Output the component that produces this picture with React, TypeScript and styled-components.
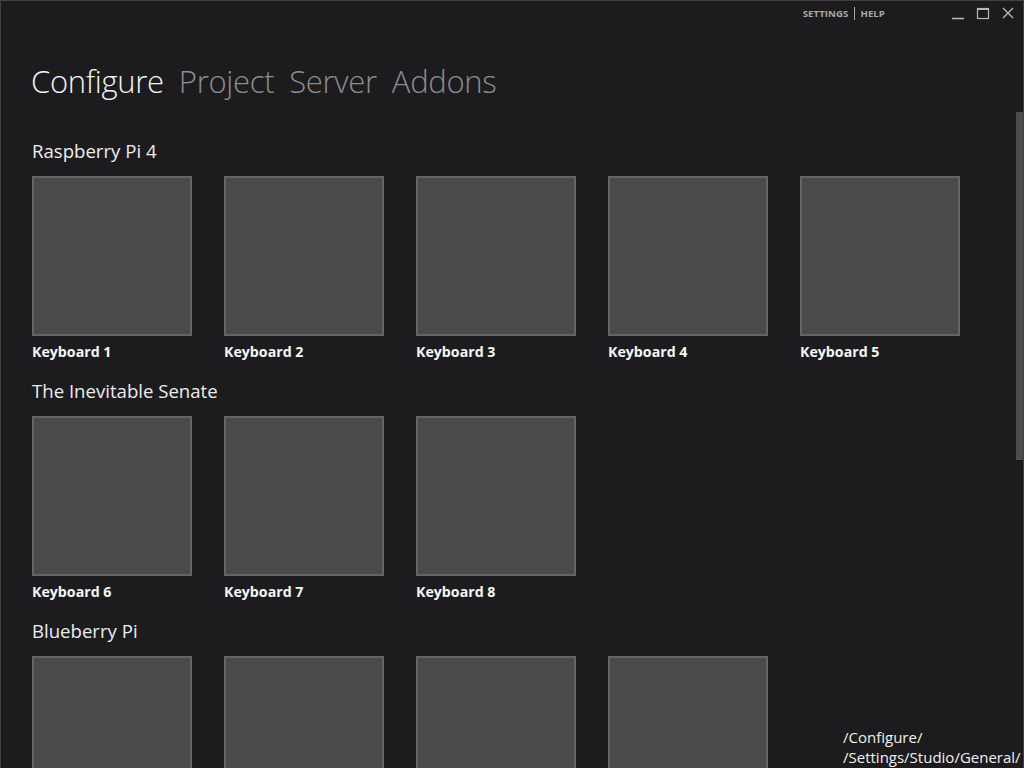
import React from "react";
import styled, { createGlobalStyle } from "styled-components";

const GlobalStyle = createGlobalStyle`
  html, body {
    margin: 0;
    padding: 0;
    background: #1c1c1e;
    overflow: hidden;
  }
  * { box-sizing: border-box; }
`;

interface Group {
  title: string;
  items: string[];
}

// the last group runs past the bottom edge, its labels are never in view
const groups: Group[] = [
  { title: "Raspberry Pi 4", items: ["Keyboard 1", "Keyboard 2", "Keyboard 3", "Keyboard 4", "Keyboard 5"] },
  { title: "The Inevitable Senate", items: ["Keyboard 6", "Keyboard 7", "Keyboard 8"] },
  { title: "Blueberry Pi", items: ["", "", "", ""] },
];

const tabs = ["Configure", "Project", "Server", "Addons"];

const Window = styled.div`
  position: relative;
  width: 1024px;
  height: 768px;
  border: 1px solid #404043;
  border-bottom: none;
  background: #1c1c1e;
  display: flex;
  flex-direction: column;
  overflow: hidden;
  font-family: "Open Sans", "Noto Sans", sans-serif;
`;

const TitleBar = styled.div`
  height: 24px;
  display: flex;
  align-items: center;
  justify-content: flex-end;
  padding-right: 3px;
`;

const TopLinks = styled.div`
  display: flex;
  align-items: center;
  margin-right: 60px;
  font-size: 9.6px;
  font-weight: 700;
  color: #a8a8a8;
  letter-spacing: 0.1px;
`;

const Divider = styled.span`
  width: 1px;
  height: 13px;
  background: #a8a8a8;
  margin: 0 5px 0 6px;
`;

const WinButton = styled.button`
  width: 25px;
  height: 20px;
  padding: 0;
  border: none;
  background: transparent;
  display: flex;
  align-items: center;
  justify-content: center;
  color: #b8b8b8;
`;

const TabRow = styled.nav`
  display: flex;
  gap: 15px;
  padding: 34px 0 0 30px;
  height: 87px;
`;

const Tab = styled.span<{ $active?: boolean }>`
  font-size: 31px;
  font-weight: 300;
  line-height: 44px;
  color: ${({ $active }) => ($active ? "#f2f2f2" : "#8c8c8c")};
  letter-spacing: -0.3px;
`;

const Body = styled.div`
  flex: 1;
  display: flex;
  min-height: 0;
`;

const Scroller = styled.div`
  flex: 1;
  overflow: hidden;
  padding: 27px 0 0 31px;
`;

const Scrollbar = styled.div`
  width: 7px;
`;

const Thumb = styled.div`
  height: 348px;
  background: #4d4d4f;
`;

const Section = styled.section`
  margin-bottom: 17px;
`;

const Heading = styled.h2`
  margin: 0 0 13px;
  font-size: 18.6px;
  font-weight: 400;
  line-height: 24px;
  color: #ececec;
`;

const TileGrid = styled.div`
  display: flex;
  gap: 32px;
`;

const TileItem = styled.div`
  width: 160px;
`;

const Tile = styled.div`
  width: 160px;
  height: 160px;
  background: #4a4a4a;
  border: 2px solid #656565;
`;

const Label = styled.div`
  margin-top: 6px;
  font-size: 14.2px;
  font-weight: 700;
  line-height: 20px;
  color: #f6f6f6;
`;

const Breadcrumb = styled.div`
  position: absolute;
  left: 842px;
  top: 726px;
  font-size: 15px;
  line-height: 20px;
  color: #f0f0f0;
  white-space: nowrap;
`;

export default function App() {
  return (
    <>
      <GlobalStyle />
      <Window>
        <TitleBar>
          <TopLinks>
            <span>SETTINGS</span>
            <Divider />
            <span>HELP</span>
          </TopLinks>
          <WinButton aria-label="minimize">
            <svg width="14" height="14" viewBox="0 0 14 14">
              <line x1="1" y1="12.5" x2="13" y2="12.5" stroke="currentColor" strokeWidth="1.5" />
            </svg>
          </WinButton>
          <WinButton aria-label="maximize">
            <svg width="14" height="14" viewBox="0 0 14 14">
              <rect x="1.5" y="2.5" width="11" height="10" fill="none" stroke="currentColor" strokeWidth="1.2" />
              <line x1="1.5" y1="3" x2="12.5" y2="3" stroke="currentColor" strokeWidth="2" />
            </svg>
          </WinButton>
          <WinButton aria-label="close">
            <svg width="14" height="14" viewBox="0 0 14 14">
              <path d="M2 2 L12 12 M12 2 L2 12" stroke="currentColor" strokeWidth="1.4" />
            </svg>
          </WinButton>
        </TitleBar>
        <TabRow>
          {tabs.map((tab, i) => (
            <Tab key={tab} $active={i === 0}>
              {tab}
            </Tab>
          ))}
        </TabRow>
        <Body>
          <Scroller>
            {groups.map((group) => (
              <Section key={group.title}>
                <Heading>{group.title}</Heading>
                <TileGrid>
                  {group.items.map((item, i) => (
                    <TileItem key={i}>
                      <Tile />
                      {item && <Label>{item}</Label>}
                    </TileItem>
                  ))}
                </TileGrid>
              </Section>
            ))}
          </Scroller>
          <Scrollbar>
            <Thumb />
          </Scrollbar>
        </Body>
        <Breadcrumb>
          /Configure/
          <br />
          /Settings/Studio/General/
        </Breadcrumb>
      </Window>
    </>
  );
}
